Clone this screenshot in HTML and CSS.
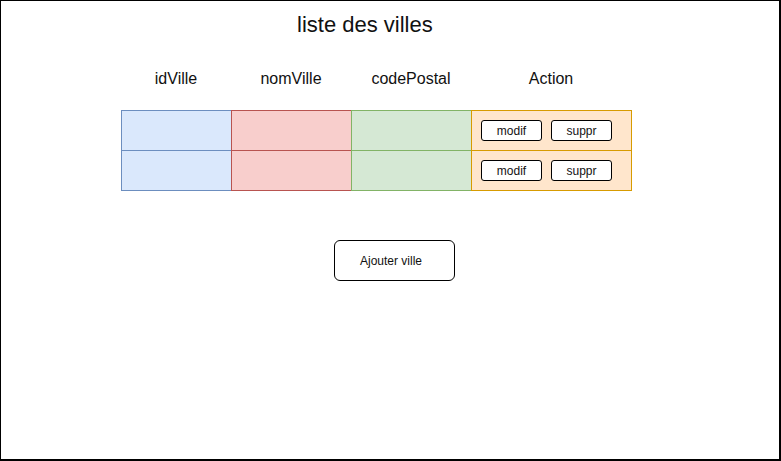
FILE: index.html
```html
<!DOCTYPE html>
<html lang="fr">
<head>
<meta charset="utf-8">
<title>liste des villes</title>
<link rel="stylesheet" href="styles.css">
</head>
<body>
<div class="frame">
  <h1 class="title">liste des villes</h1>
  <div class="grid head">
    <div class="hcell">idVille</div>
    <div class="hcell">nomVille</div>
    <div class="hcell">codePostal</div>
    <div class="hcell">Action</div>
  </div>
  <div class="grid body">
    <div class="cell blue"></div>
    <div class="cell red"></div>
    <div class="cell green"></div>
    <div class="cell orange"><span class="btn">modif</span><span class="btn">suppr</span></div>
    <div class="cell blue"></div>
    <div class="cell red"></div>
    <div class="cell green"></div>
    <div class="cell orange"><span class="btn">modif</span><span class="btn">suppr</span></div>
  </div>
  <div class="add-row">
    <span class="add-btn">Ajouter ville</span>
  </div>
</div>
</body>
</html>
```

FILE: styles.css
```css
* { box-sizing: border-box; }
html, body { margin: 0; padding: 0; background: #fff; }
body { font-family: "Liberation Sans", Arial, sans-serif; color: #111; }

.frame {
  width: 781px;
  height: 461px;
  border: 1px solid #000;
  border-right-width: 2px;
  border-bottom-width: 2px;
  display: flex;
  flex-direction: column;
}

.title {
  margin: 11px 0 0 296px;
  font-size: 22px;
  line-height: 26px;
  font-weight: normal;
}

.grid {
  display: grid;
  grid-template-columns: 110px 120px 120px 160px;
  margin-left: 120px;
}

.head { margin-top: 32px; }
.hcell {
  text-align: center;
  font-size: 16px;
  line-height: 18px;
}

.body {
  margin-top: 22px;
  grid-template-rows: 40px 40px;
}
.cell {
  width: calc(100% + 1px);
  height: 41px;
  border: 1px solid;
  display: flex;
  gap: 9px;
  padding: 9px 0 0 9px;
}
.blue { background: #dae8fc; border-color: #6c8ebf; }
.red { background: #f8cecc; border-color: #b85450; }
.green { background: #d5e8d4; border-color: #82b366; }
.orange { background: #ffe6cc; border-color: #d79b00; }

.btn {
  width: 61px;
  height: 21px;
  border: 1px solid #000;
  border-radius: 3px;
  background: #fff;
  font-size: 12px;
  display: flex;
  align-items: center;
  justify-content: center;
}

.add-row {
  margin: 50px 0 0 333px;
  display: flex;
}
.add-btn {
  width: 121px;
  height: 41px;
  border: 1px solid #000;
  border-radius: 6px;
  font-size: 12px;
  line-height: 14px;
  display: flex;
  align-items: center;
  justify-content: center;
  padding-right: 7px;
}
```
